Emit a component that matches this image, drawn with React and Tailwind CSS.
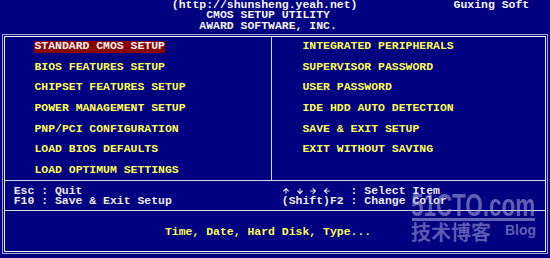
import React from "react";
import { ArrowUp, ArrowDown, ArrowRight, ArrowLeft } from "lucide-react";

const left = [
  "STANDARD CMOS SETUP",
  "BIOS FEATURES SETUP",
  "CHIPSET FEATURES SETUP",
  "POWER MANAGEMENT SETUP",
  "PNP/PCI CONFIGURATION",
  "LOAD BIOS DEFAULTS",
  "LOAD OPTIMUM SETTINGS",
];
const right = [
  "INTEGRATED PERIPHERALS",
  "SUPERVISOR PASSWORD",
  "USER PASSWORD",
  "IDE HDD AUTO DETECTION",
  "SAVE & EXIT SETUP",
  "EXIT WITHOUT SAVING",
];

export default function App() {
  const arrows = [ArrowUp, ArrowDown, ArrowRight, ArrowLeft];
  return (
    <div className="relative w-[550px] h-[258px] overflow-hidden bg-[#000080] font-['Liberation_Mono',monospace] font-bold text-[11.46px] leading-[10.32px] whitespace-pre">
      {/* title */}
      <div className="text-[#f4f4f4]">
        <div className="flex h-[10.32px]">
          <span className="pl-[25ch] w-[66ch] shrink-0">(http://shunsheng.yeah.net)</span>
          <span>Guxing Soft</span>
        </div>
        <div className="h-[10.32px] pl-[30ch]">CMOS SETUP UTILITY</div>
        <div className="h-[10.32px] pl-[29ch]">AWARD SOFTWARE, INC.</div>
      </div>

      {/* frame */}
      <div className="ml-[2px] mt-[3px] w-[546px] border border-[#a8a8d0] p-px">
        <div className="border border-[#f4f4ff] flex flex-col">
          <div className="flex h-[143px]">
            <div className="w-[266px] shrink-0 pl-[29.4px] pt-[4.2px] flex flex-col gap-[10.32px] text-[#fcfc54]">
              {left.map((t, i) => (
                <div key={t} className="h-[10.32px]">
                  {i === 0 ? (
                    <span className="inline-block bg-[#880000] text-[#f8f0f0] h-[11.5px] -mt-[0.6px]">{t}</span>
                  ) : (
                    t
                  )}
                </div>
              ))}
            </div>
            <div className="w-px bg-[#d8d8ec]" />
            <div className="flex-1 pl-[30.5px] pt-[4.2px] flex flex-col gap-[10.32px] text-[#fcfc54]">
              {right.map((t) => (
                <div key={t} className="h-[10.32px]">{t}</div>
              ))}
            </div>
          </div>
          <div className="h-px bg-[#d8d8ec]" />
          <div className="h-[29px] pt-[4.7px] pl-[8.75px] text-[#ececec]">
            <div className="flex h-[10.32px]">
              <span className="w-[39ch] shrink-0">Esc : Quit</span>
              <span className="w-[68.75px] shrink-0 flex items-center">
                {arrows.map((A, i) => (
                  <span key={i} className="w-[13.75px] flex justify-start">
                    <A size={8} strokeWidth={3.2} />
                  </span>
                ))}
              </span>
              <span>: Select Item</span>
            </div>
            <div className="flex h-[10.32px]">
              <span className="w-[39ch] shrink-0">F10 : Save &amp; Exit Setup</span>
              <span>(Shift)F2 : Change Color</span>
            </div>
          </div>
          <div className="h-px bg-[#d8d8ec]" />
          <div className="h-[40px] pt-[16px] pl-[160px] text-[#fcfc54]">
            Time, Date, Hard Disk, Type...
          </div>
        </div>
      </div>

      {/* watermark overlay */}
      <div className="absolute left-[411px] top-[189px] origin-left scale-x-70 font-['Liberation_Sans',sans-serif] text-[32px] leading-none text-[#b4b4e0]/55">
        51CTO.com
      </div>
      <div className="absolute left-[412px] top-[218px] w-[123px] h-[3px] bg-[#b4b4e0]/55" />
      <div className="absolute left-[411px] top-[222px] font-['Noto_Sans_CJK_SC',sans-serif] text-[20px] leading-none text-[#b4b4e0]/50">
        技术博客
      </div>
      <div className="absolute left-[505px] top-[223px] font-['Liberation_Sans',sans-serif] text-[14px] leading-none text-[#b4b4e0]/55">
        Blog
      </div>
    </div>
  );
}
